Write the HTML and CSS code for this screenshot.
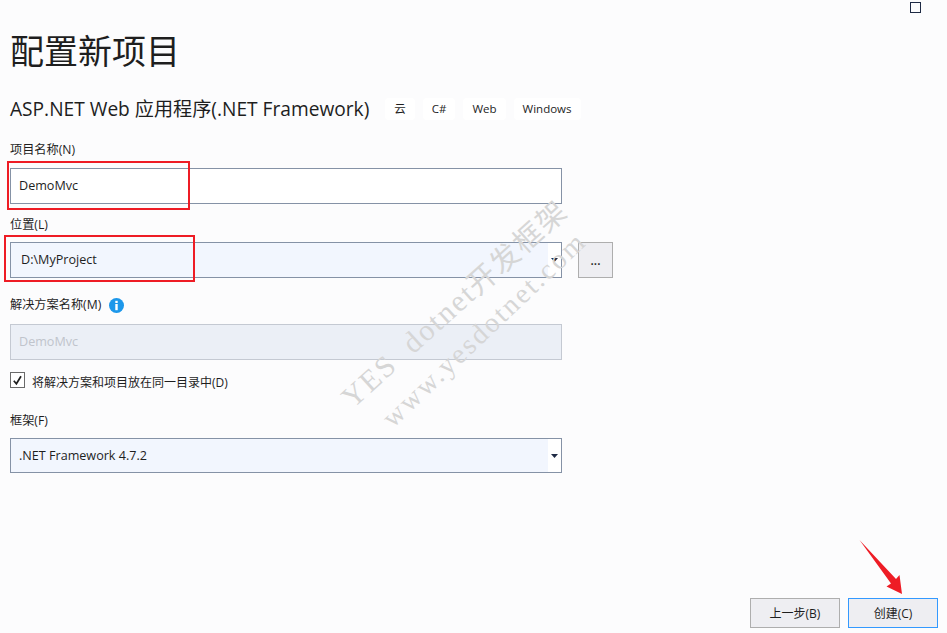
FILE: index.html
```html
<!DOCTYPE html>
<html lang="zh-CN">
<head>
<meta charset="utf-8">
<title>配置新项目</title>
<link rel="stylesheet" href="styles.css">
</head>
<body>
<div class="app">
  <div class="titlebar"><span class="max-icon"></span></div>
  <main class="form">
    <h1 class="title">配置新项目</h1>
    <div class="subtitle-row">
      <h2 class="subtitle">ASP.NET Web 应用程序(.NET Framework)</h2>
      <div class="tags">
        <span class="tag">云</span>
        <span class="tag">C#</span>
        <span class="tag">Web</span>
        <span class="tag">Windows</span>
      </div>
    </div>
    <label class="label label-first">项目名称(N)</label>
    <div class="input input-plain">DemoMvc</div>
    <label class="label label-loc">位置(L)</label>
    <div class="loc-row">
      <div class="input combo"><span class="combo-value loc-value">D:\MyProject</span><span class="combo-arrow"><svg width="7" height="4" viewBox="0 0 7 4"><path d="M0 0h7L3.500 4z" fill="#1e2a44"/></svg></span></div>
      <button class="btn-browse">...</button>
    </div>
    <label class="label label-sol">解决方案名称(M)<svg class="info" width="15" height="15" viewBox="0 0 15 15"><circle cx="7.5" cy="7.5" r="7.5" fill="#1c97ea"/><rect x="6.3" y="6" width="2.4" height="6.2" fill="#fff"/><rect x="6.3" y="2.8" width="2.4" height="2.2" fill="#fff"/></svg></label>
    <div class="input input-disabled">DemoMvc</div>
    <div class="check-row">
      <span class="checkbox"><svg width="13" height="13" viewBox="0 0 13 13"><path d="M2.8 6.800l2.600 3 4.600-7.600" fill="none" stroke="#1e1e1e" stroke-width="1.700"/></svg></span>
      <span class="check-label">将解决方案和项目放在同一目录中(D)</span>
    </div>
    <label class="label label-fw">框架(F)</label>
    <div class="input combo combo-fw"><span class="combo-value">.NET Framework 4.7.2</span><span class="combo-arrow"><svg width="7" height="4" viewBox="0 0 7 4"><path d="M0 0h7L3.500 4z" fill="#1e2a44"/></svg></span></div>
  </main>
  <footer class="footer">
    <button class="btn">上一步(B)</button>
    <button class="btn btn-primary">创建(C)</button>
  </footer>
</div>
<div class="mark mark-a"></div>
<div class="mark mark-b"></div>
<svg class="arrow" width="60" height="70" viewBox="0 0 60 70"><path d="M0.500 0L37 39 40.500 35 43 54 27.500 46.500 32 43.500z" fill="#ee1c25"/></svg>
<div class="wm wm-1">YES&nbsp; dotnet<span class="wm-cjk">开发框架</span></div>
<div class="wm wm-2">www.yesdotnet.com</div>
</body>
</html>
```
FILE: styles.css
```css
* { box-sizing: border-box; }
html, body { margin: 0; padding: 0; height: 100%; }
body {
  background: #fcfcfd;
  color: #1e1e1e;
  font-family: "Open Sans", "Noto Sans CJK SC", sans-serif;
  font-size: 12px;
  overflow: hidden;
  position: relative;
}
.app { display: flex; flex-direction: column; height: 633px; }
.titlebar { display: flex; justify-content: flex-end; height: 13px; padding: 2px 26px 0 0; }
.max-icon { width: 11px; height: 11px; border: 1.5px solid #1e2a44; }
.form { flex: 1; padding: 0 0 0 10px; display: flex; flex-direction: column; align-items: flex-start; }
.title { margin: 16px 0 0; font-size: 34px; font-weight: 400; line-height: 44px; color: #1e1e1e; }
.subtitle-row { display: flex; align-items: center; margin-top: 22px; height: 28px; }
.subtitle { margin: 0; font-size: 19.15px; font-weight: 400; line-height: 28px; white-space: nowrap; }
.tags { display: flex; gap: 8px; margin-left: 16px; }
.tag { background: #fff; border-radius: 4px; height: 22px; line-height: 21px; padding: 0 9px; font-size: 11.5px; }
.label { display: flex; align-items: center; height: 18px; font-size: 12.2px; line-height: 18px; }
.label-first { margin-top: 18px; }
.label-loc { margin-top: 12px; }
.label-sol { margin-top: 18px; gap: 8px; }
.label-fw { margin-top: 24px; }
.input {
  width: 552px;
  height: 36px;
  border: 1px solid #8592a6;
  background: #fff;
  display: flex;
  align-items: center;
  padding: 0 0 2px 8px;
  font-size: 12.6px;
}
.input-plain { margin-top: 9px; }
.input-disabled { background: #ebeff6; border-color: #c4c9d2; color: #c0c4cc; margin-top: 10px; }
.combo { padding: 0; background: #fff; align-items: stretch; }
.combo-value { flex: 1; background: #f2f6fe; display: flex; align-items: center; padding-left: 8px; }
.loc-value { padding: 0 0 2px 10px; }
.combo-arrow { width: 13px; display: flex; align-items: center; justify-content: center; }
.combo-fw { height: 35px; margin-top: 8px; }
.loc-row { display: flex; gap: 16px; margin-top: 8px; }
.btn-browse {
  width: 35px; height: 36px; padding: 0;
  background: #eeeef2; border: 1px solid #aeaeae; color: #1e1e1e;
  font: inherit;
  font-weight: 600;
}
.check-row { display: flex; align-items: flex-start; gap: 7px; margin-top: 12px; height: 16px; }
.checkbox { width: 15px; height: 16px; border: 1px solid #6a6a6a; background: #fff; display: flex; align-items: center; justify-content: center; }
.check-label { font-size: 12px; line-height: 22px; }
.footer { display: flex; justify-content: flex-end; gap: 8px; padding: 0 9px 5px 0; }
.btn {
  width: 90px; height: 30px; padding: 0;
  background: #eeeef2; border: 1px solid #aeaeae; color: #1e1e1e;
  font: inherit;
}
.btn-primary { border-color: #3399ff; }
.mark { position: absolute; border: 2px solid #ee1c25; }
.mark-a { left: 7px; top: 161px; width: 183px; height: 49px; }
.mark-b { left: 4px; top: 235px; width: 191px; height: 47px; }
.arrow { position: absolute; left: 859px; top: 540px; }
.wm {
  position: absolute;
  font-family: "Liberation Serif", "Noto Sans CJK SC", serif;
  color: #d6d6d6;
  white-space: nowrap;
  transform: rotate(-42deg);
  transform-origin: 0 100%;
  line-height: 30px;
}
.wm-1 { left: 356px; top: 383px; font-size: 30px; letter-spacing: 2px; }
.wm-cjk { font-size: 29px; }
.wm-2 { left: 397px; top: 403px; font-size: 28px; letter-spacing: 2.4px; transform: rotate(-43.5deg); }
```
